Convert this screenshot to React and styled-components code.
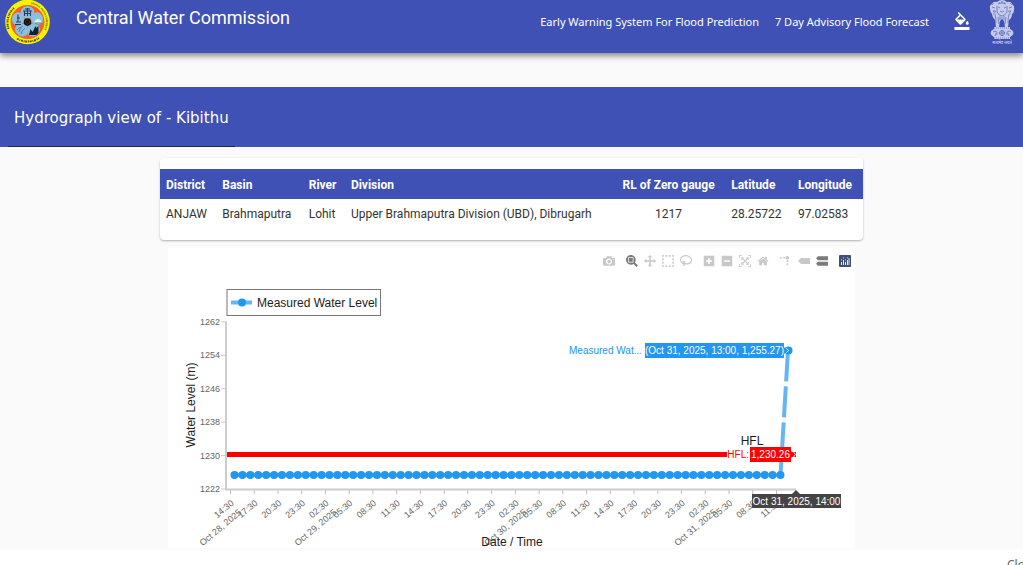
import React from 'react';
import styled, { createGlobalStyle } from 'styled-components';
import { MdFormatColorFill } from 'react-icons/md';

const GlobalStyle = createGlobalStyle`
  * {
    box-sizing: border-box;
  }

  body {
    margin: 0;
    background: #fff;
    color: #333;
    font-family: Roboto, sans-serif;
  }
`;

const Page = styled.div`
  display: flex;
  flex-direction: column;
  height: 100vh;
  overflow: hidden;
`;

const Header = styled.header`
  display: flex;
  align-items: flex-start;
  flex-shrink: 0;
  height: 53px;
  padding: 0 6px 0 5px;
  background: #3f51b5;
  color: #fff;
  box-shadow: 0 3px 6px rgba(0, 0, 0, 0.45);
  z-index: 1;
`;

const Brand = styled.h1`
  flex: 1;
  margin: 0 0 0 26px;
  font-size: 18px;
  font-weight: 400;
  line-height: 36px;
`;

const Nav = styled.nav`
  display: flex;
  gap: 16px;
  line-height: 44px;
`;

const NavLink = styled.a`
  color: #fff;
  font-family: 'Noto Sans', sans-serif;
  font-size: 11px;
  text-decoration: none;
`;

const ThemeButton = styled.button`
  display: flex;
  margin: 12px 16px 0 24px;
  padding: 0;
  border: 0;
  background: none;
  color: #fff;
  font-size: 18px;
`;

const Main = styled.main`
  flex-shrink: 0;
  padding: 34px 0 1px;
  background: #fafafa;
`;

const Banner = styled.div`
  display: flex;
  height: 60px;
  padding: 0 8px;
  background: #3f51b5;
`;

const Tab = styled.button`
  padding: 3px 6px 0;
  border: 0;
  border-bottom: 1px solid #23263a;
  background: none;
  color: #fff;
  font-family: 'DejaVu Sans', sans-serif;
  font-size: 15px;
`;

const Content = styled.div`
  width: 100%;
  max-width: 703px;
  margin: 0 auto;
  padding-top: 11px;
`;

const Card = styled.section`
  padding: 11px 0;
  border-radius: 4px;
  background: #fff;
  box-shadow: 0 1px 2px rgba(0, 0, 0, 0.3);
`;

const Table = styled.table`
  width: 100%;
  border-collapse: collapse;
  table-layout: fixed;
  font-size: 12px;
`;

const HeadCell = styled.th`
  width: ${({ $width }) => $width};
  height: 30px;
  padding: 1px 6px 0;
  background: #3f51b5;
  color: #fff;
  font-weight: 700;
  text-align: ${({ $align }) => $align || 'left'};
  white-space: nowrap;
`;

const Cell = styled.td`
  height: 30px;
  padding: 0 6px;
  text-align: ${({ $align }) => $align || 'left'};
  white-space: nowrap;
`;

const ChartPanel = styled.section`
  margin: 8px 8px 0;
  background: #fff;
`;

const Modebar = styled.div`
  display: flex;
  justify-content: flex-end;
  gap: 5px;
  height: 26px;
  padding-right: 1px;
`;

const ModebarGroup = styled.div`
  display: flex;
`;

const ModebarButton = styled.button`
  display: flex;
  align-items: center;
  justify-content: center;
  width: 18px;
  height: 26px;
  padding: 0;
  border: 0;
  background: none;
  color: ${({ $active }) => ($active ? '#7b7b7b' : '#c8c8c8')};
`;

const Plot = styled.svg`
  display: block;
  width: 100%;
  font-family: 'Liberation Sans', Arial, sans-serif;
`;

const Footer = styled.footer`
  display: flex;
  justify-content: flex-end;
  padding: 8px 0;
  background: #fff;
  overflow: hidden;
`;

const Notice = styled.span`
  width: 16px;
  font-family: 'Noto Sans', sans-serif;
  font-size: 12px;
  line-height: 16px;
  color: #666;
  white-space: nowrap;
`;

const columns = [
  { title: 'District', value: 'ANJAW', width: '8%' },
  { title: 'Basin', value: 'Brahmaputra', width: '12.3%' },
  { title: 'River', value: 'Lohit', width: '6%' },
  { title: 'Division', value: 'Upper Brahmaputra Division (UBD), Dibrugarh', width: '38%' },
  { title: 'RL of Zero gauge', value: '1217', width: '16.1%', align: 'center' },
  { title: 'Latitude', value: '28.25722', width: '9.5%' },
  { title: 'Longitude', value: '97.02583', width: '10.1%' },
];

const icons = {
  camera: { w: 1000, d: 'm500 450c-83 0-150-67-150-150 0-83 67-150 150-150 83 0 150 67 150 150 0 83-67 150-150 150z m400 150h-120c-16 0-34 13-39 29l-31 93c-6 15-23 28-40 28h-340c-16 0-34-13-39-28l-31-94c-6-15-23-28-40-28h-120c-55 0-100-45-100-100v-450c0-55 45-100 100-100h800c55 0 100 45 100 100v450c0 55-45 100-100 100z m-400-550c-138 0-250 112-250 250 0 138 112 250 250 250 138 0 250-112 250-250 0-138-112-250-250-250z m365 380c-19 0-35 16-35 35 0 19 16 35 35 35 19 0 35-16 35-35 0-19-16-35-35-35z' },
  zoom: { w: 1000, d: 'm1000-25l-250 251c40 63 63 138 63 218 0 224-182 406-407 406-224 0-406-182-406-406s183-406 407-406c80 0 155 22 218 62l250-250 125 125z m-812 250l0 438 437 0 0-438-437 0z m62 375l313 0 0-312-313 0 0 312z' },
  pan: { w: 1000, d: 'm1000 350l-187 188 0-125-250 0 0 250 125 0-188 187-187-187 125 0 0-250-250 0 0 125-188-188 186-187 0 125 252 0 0-250-125 0 187-188 188 188-125 0 0 250 250 0 0-126 187 188z' },
  select: { w: 1000, d: 'm0 850l0-143 143 0 0 143-143 0z m286 0l0-143 143 0 0 143-143 0z m285 0l0-143 143 0 0 143-143 0z m286 0l0-143 143 0 0 143-143 0z m-857-286l0-143 143 0 0 143-143 0z m857 0l0-143 143 0 0 143-143 0z m-857-285l0-143 143 0 0 143-143 0z m857 0l0-143 143 0 0 143-143 0z m-857-286l0-143 143 0 0 143-143 0z m286 0l0-143 143 0 0 143-143 0z m285 0l0-143 143 0 0 143-143 0z m286 0l0-143 143 0 0 143-143 0z' },
  lasso: { w: 1000, stroke: true, d: 'M170 190C60 270 20 400 50 530c50 190 290 310 540 250 250-60 410-240 360-430-50-180-270-270-510-220-90 20-150 50-190 90M170 190c-20 90 70 140 160 110 80-30 90-110 30-150-70-40-170-30-190 40zM360 150c30-70-20-160-110-200' },
  zoomIn: { w: 875, d: 'm1 787l0-875 875 0 0 875-875 0z m687-500l-187 0 0-187-125 0 0 187-188 0 0 125 188 0 0 187 125 0 0-187 187 0 0-125z' },
  zoomOut: { w: 875, d: 'm0 788l0-876 875 0 0 876-875 0z m688-500l-500 0 0 125 500 0 0-125z' },
  autoscale: { w: 1000, d: 'm250 850l-187 0-63 0 0-62 0-188 63 0 0 188 187 0 0 62z m688 0l-188 0 0-62 188 0 0-188 62 0 0 188 0 62-62 0z m-875-938l0 188-63 0 0-188 0-62 63 0 187 0 0 62-187 0z m875 188l0-188-188 0 0-62 188 0 62 0 0 62 0 188-62 0z m-125 188l-1 0-93-94-156 156 156 156 92-93 2 0 0 250-250 0 0-2 93-92-156-156-156 156 94 92 0 2-250 0 0-250 0 0 93 93 157-156-157-156-93 94 0 0 0-250 250 0 0 0-94 93 156 157 156-157-93-93 0 0 250 0 0 250z' },
  home: { w: 929, d: 'm786 296v-267q0-15-11-26t-25-10h-214v214h-143v-214h-214q-15 0-25 10t-11 26v267q0 1 0 2t0 2l321 264 321-264q1-1 1-4z m124 39l-34-41q-5-5-12-6h-2q-7 0-12 3l-386 322-386-322q-7-4-13-4-7 2-12 7l-35 41q-4 5-3 13t6 12l401 334q18 15 42 15t43-15l136-114v109q0 8 5 13t13 5h107q8 0 13-5t5-13v-227l122-102q5-5 6-12t-4-13z' },
  spike: { w: 1000, transform: 'matrix(1.5 0 0 -1.5 0 850)', d: 'M512 409c0-57-46-104-103-104-57 0-104 47-104 104 0 57 47 103 104 103 57 0 103-46 103-103z m-327-39l92 0 0 92-92 0z m-185 0l92 0 0 92-92 0z m370-186l92 0 0 93-92 0z m0-184l92 0 0 92-92 0z' },
  closest: { w: 1500, d: 'm375 725l0 0-375-375 375-374 0-1 1125 0 0 750-1125 0z' },
  compare: { w: 1125, d: 'm187 786l0 2-187-188 188-187 0 0 937 0 0 373-938 0z m0-499l0 1-187-188 188-188 0 0 937 0 0 376-938-1z' },
};

const modebarGroups = [
  [{ icon: 'camera', label: 'Download plot' }],
  [
    { icon: 'zoom', label: 'Zoom', active: true },
    { icon: 'pan', label: 'Pan' },
    { icon: 'select', label: 'Box Select' },
    { icon: 'lasso', label: 'Lasso Select' },
  ],
  [
    { icon: 'zoomIn', label: 'Zoom in' },
    { icon: 'zoomOut', label: 'Zoom out' },
    { icon: 'autoscale', label: 'Autoscale' },
    { icon: 'home', label: 'Reset axes' },
  ],
  [
    { icon: 'spike', label: 'Toggle Spike Lines' },
    { icon: 'closest', label: 'Show closest data on hover' },
    { icon: 'compare', label: 'Compare data on hover', active: true },
  ],
];

const ModebarIcon = ({ name }) => {
  const { w, d, transform, stroke } = icons[name];
  return (
    <svg width="12" height="12" viewBox={`0 0 ${w} 1000`}>
      <path
        d={d}
        transform={transform || 'matrix(1 0 0 -1 0 850)'}
        fill={stroke ? 'none' : 'currentColor'}
        stroke={stroke ? 'currentColor' : 'none'}
        strokeWidth="90"
      />
    </svg>
  );
};

const PlotlyLogo = () => (
  <svg width="12" height="12" viewBox="0 0 12 12">
    <rect width="12" height="12" rx="1" fill="#3f4f75" />
    <path d="M2.500 7v3M4.500 5v5M6.500 7v3M8.500 5v5M10 3v7" stroke="#dfe6f5" strokeWidth="1" />
    <g fill="#9fb4e0">
      <circle cx="2.500" cy="4.800" r=".7" />
      <circle cx="4.500" cy="2.800" r=".7" />
      <circle cx="6.500" cy="4.800" r=".7" />
      <circle cx="8.500" cy="2.800" r=".7" />
    </g>
  </svg>
);

const CommissionLogo = () => (
  <svg width="45" height="45" viewBox="0 0 45 45" role="img" aria-label="Central Water Commission logo">
    <defs>
      <path id="ringRight" d="M25.700 3.800A18.500 18.500 0 0 1 36.700 33.900" />
    </defs>
    <circle cx="22.500" cy="22" r="22.300" fill="#f8f400" />
    <circle cx="22.500" cy="22" r="17" fill="#f4602c" />
    <g fill="#8ebfdc">
      {[0, 72, 144, 216, 288].map((angle) => (
        <path
          key={angle}
          d="M22.500 20l-6-5q-2-5 1.500-7.500q4.500-3 9 0q3.500 2.500 1.500 7.500z"
          transform={`rotate(${angle} 22.500 22)`}
        />
      ))}
    </g>
    <g stroke="#23406a" fill="none" strokeWidth="1.100">
      <path d="M18 11h9M19 13.500h7M20 9h5M19.500 11v5M22.500 8v8M25.500 11v5" />
      <path d="M13 14.500v8M11 22h5M12 18h3M10 24.500h6" />
    </g>
    <path d="M29 22q2.500-5 7-1.500l.5 1.500z" fill="#dceef5" />
    <path d="M30 23.500q3 1.500 7 0" stroke="#4c9b6e" fill="none" />
    <path d="M14 32q1-5 4-6M16 34q1-4 4-6M12 30q1-2 4-3" stroke="#4d7f9f" fill="none" />
    <path d="M24 35l1.500-6 2 3 3-6 1 2 2-2v7l-2 2z" fill="#15202b" />
    <circle cx="22.500" cy="22" r="3.800" fill="#111" />
    <circle cx="22.500" cy="22" r="2" fill="none" stroke="#964925" strokeDasharray="1 1" />
    <text fontSize="2.200" fontWeight="700" fontFamily="Liberation Sans" fill="#333">
      <textPath href="#ringRight">CENTRAL WATER COMMISSION</textPath>
    </text>
    <path d="M3.500 29A20 20 0 0 1 9 8" fill="none" stroke="#55530e" strokeWidth="2" strokeDasharray="1.500 .7 .8 .6" />
    <path d="M12 38.500A20 20 0 0 0 34 38" fill="none" stroke="#55530e" strokeWidth="2" strokeDasharray="2 .8 1 .6" />
  </svg>
);

const StateEmblem = () => (
  <svg width="30" height="46" viewBox="0 0 30 46" role="img" aria-label="State Emblem of India">
    <g fill="#c5cbe8">
      <path d="M10 2Q12 0 15 0q3 0 5 2 4-1 5 2 3 2 2 6 0 3-2 4 0 4-3 6l-1 7h-3l-1-6-2-2-2 2-1 6H9l-1-7q-3-3-3-6-2-2-2-5-1-4 2-5 1-3 5-2z" />
      <path d="M7 27h16v2H7z" />
      <ellipse cx="15" cy="33" rx="11.500" ry="5.500" />
      <path d="M7 37h16v2H7z" />
    </g>
    <g fill="none" stroke="#3f51b5" strokeWidth=".6">
      <path d="M11 4q4-3 8 0M11 7l2 1M17 8l2-1M13 11q2 2 4 0M5 7l3 1M22 8l3-1M6 11q2 2 3 0M21 11q2 2 3 0" />
      <path d="M10 6v6q2 4 5 4t5-4V6M8 14q1 4 1 9M22 14q-1 4-1 9M11 17l1 7M19 17l-1 7M13 16v4M17 16v4M15 17v4" />
      <path d="M5 5l2-2M25 5l-2-2M12 2l1 2M15 1v3M18 2l-1 2M7 10v5M23 10v5" strokeDasharray="1 .6" />
      <circle cx="15" cy="33" r="2.500" />
      <path d="M12 33h6M15 30v6M6 32q2-2 4 0v3M24 32q-2-2-4 0v3M8 36l1-3M22 36l-1-3" />
      <path d="M7 28h16M7 38h16" strokeDasharray="1 1" />
    </g>
    <text x="15" y="44" textAnchor="middle" fontSize="4" fill="#dfe3f5" fontFamily="Noto Sans">सत्यमेव जयते</text>
  </svg>
);

/* one hour is HOUR wide, the first reading is at 15:00 on Oct 28 */
const HOUR = 7.913;
const FIRST_READING = 66.5;
const BASE_LEVEL_Y = 201;
const readings = Array.from({ length: 70 }, (_, i) => FIRST_READING + i * HOUR);

const levels = [1262, 1254, 1246, 1238, 1230, 1222];
const hours = ['14:30', '17:30', '20:30', '23:30', '02:30', '05:30', '08:30', '11:30'];
const dates = { 0: 'Oct 28, 2025', 4: 'Oct 29, 2025', 12: 'Oct 30, 2025', 20: 'Oct 31, 2025' };
const timeTicks = Array.from({ length: 24 }, (_, i) => ({
  x: 62.5 + i * 3 * HOUR,
  label: hours[i % 8],
  date: dates[i],
}));

const Hydrograph = () => (
  <Plot viewBox="0 0 687 274" role="img" aria-label="Hydrograph of measured water level">
    <g fontSize="9" fill="#666">
      {levels.map((level, i) => {
        const y = 48 + i * 33.4;
        return (
          <g key={level}>
            <path d={`M53 ${y}h5`} stroke="#ccc" />
            <text x="52" y={y + 3} textAnchor="end">{level}</text>
          </g>
        );
      })}
      {timeTicks.map(({ x, label, date }) => (
        <g key={x}>
          <path d={`M${x} 216v4`} stroke="#bbb" />
          <text transform={`translate(${x + 4} 230) rotate(-40)`} textAnchor="end">
            <tspan x="0">{label}</tspan>
            {date && <tspan x="0" dy="12">{date}</tspan>}
          </text>
        </g>
      ))}
    </g>
    <path d="M58 47.500V215.500H628" fill="none" stroke="#ccc" strokeWidth="2" />

    <path d="M59 180.500H628" stroke="#f00" strokeWidth="5" />
    <path d={`M${FIRST_READING} ${BASE_LEVEL_Y}H612.500`} stroke="#64b5f6" strokeWidth="4" />
    <path d={`M620 76.500L612.500 ${BASE_LEVEL_Y}`} stroke="#64b5f6" strokeWidth="4" strokeDasharray="31 5" />
    <g fill="#2196f3">
      {readings.map((x) => (
        <circle key={x} cx={x} cy={BASE_LEVEL_Y} r="4" />
      ))}
      <circle cx="620.500" cy="76.500" r="4" />
    </g>

    <g fontSize="12" fill="#1c1c1c">
      <rect x="59" y="15.500" width="153.500" height="26" fill="#fff" stroke="#777" />
      <path d="M63 28.500h21" stroke="#64b5f6" strokeWidth="4" />
      <circle cx="74" cy="28.500" r="4" fill="#2196f3" />
      <text x="89" y="33">Measured Water Level</text>
      <text x="584" y="171" textAnchor="middle">HFL</text>
      <text x="344" y="272" textAnchor="middle">Date / Time</text>
      <text transform="translate(27 131) rotate(-90)" textAnchor="middle">Water Level (m)</text>
    </g>

    <g fontSize="10">
      <text x="474" y="80" textAnchor="end" fill="#2196f3">Measured Wat...</text>
      <path d="M477 69h139v4l4 3.500l-4 3.500v4H477z" fill="#2196f3" />
      <path d="M618.500 74.500l2 2l-2 2" fill="none" stroke="#fff" />
      <text x="546.500" y="80" textAnchor="middle" fill="#fff">(Oct 31, 2025, 13:00, 1,255.27)</text>

      <path d="M559 180.500h24" stroke="#fff" strokeWidth="5" />
      <text x="581" y="184" textAnchor="end" fill="#f00">HFL:</text>
      <path d="M582 173h41v4l4 3.500l-4 3.500v4H582z" fill="#f00" />
      <path d="M625.500 178l2 2.500l-2 2.500" fill="none" stroke="#fff" />
      <text x="602.500" y="184" textAnchor="middle" fill="#fff">1,230.26</text>

      <path d="M584 220h40l4-4l4 4h41v14H584z" fill="#444" />
      <text x="628.500" y="231" textAnchor="middle" fill="#fff">Oct 31, 2025, 14:00</text>
    </g>
  </Plot>
);

const App = () => {
  return (
    <>
      <GlobalStyle />
      <Page>
        <Header>
          <CommissionLogo />
          <Brand>Central Water Commission</Brand>
          <Nav>
            <NavLink href="#warning">Early Warning System For Flood Prediction</NavLink>
            <NavLink href="#advisory">7 Day Advisory Flood Forecast</NavLink>
          </Nav>
          <ThemeButton aria-label="Change theme">
            <MdFormatColorFill />
          </ThemeButton>
          <StateEmblem />
        </Header>
        <Main>
          <Banner>
            <Tab>Hydrograph view of - Kibithu</Tab>
          </Banner>
          <Content>
            <Card>
              <Table>
                <thead>
                  <tr>
                    {columns.map(({ title, width, align }) => (
                      <HeadCell key={title} $width={width} $align={align}>{title}</HeadCell>
                    ))}
                  </tr>
                </thead>
                <tbody>
                  <tr>
                    {columns.map(({ title, value, align }) => (
                      <Cell key={title} $align={align}>{value}</Cell>
                    ))}
                  </tr>
                </tbody>
              </Table>
            </Card>
            <ChartPanel>
              <Modebar>
                {modebarGroups.map((group) => (
                  <ModebarGroup key={group[0].icon}>
                    {group.map(({ icon, label, active }) => (
                      <ModebarButton key={icon} aria-label={label} $active={active}>
                        <ModebarIcon name={icon} />
                      </ModebarButton>
                    ))}
                  </ModebarGroup>
                ))}
                <ModebarGroup>
                  <ModebarButton aria-label="Produced with Plotly">
                    <PlotlyLogo />
                  </ModebarButton>
                </ModebarGroup>
              </Modebar>
              <Hydrograph />
            </ChartPanel>
          </Content>
        </Main>
        <Footer>
          <Notice>Close</Notice>
        </Footer>
      </Page>
    </>
  );
};

export default App;
